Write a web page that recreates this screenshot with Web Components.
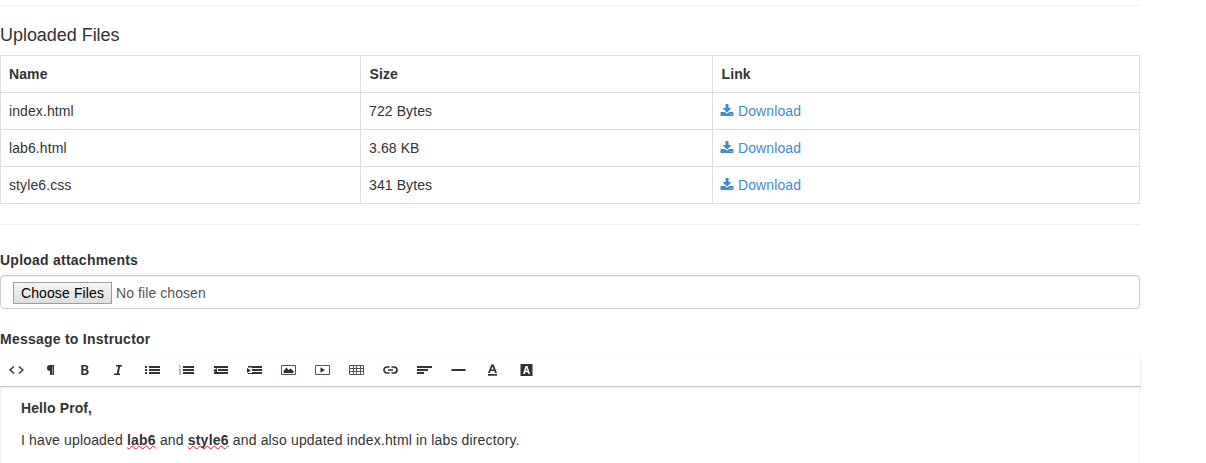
<!DOCTYPE html>
<html lang="en"><head><meta charset="utf-8"><title>Lab submission</title>
<style>
html,body{margin:0;height:463px;overflow:hidden;background:#fff}
body{font:14px/20px "Liberation Sans",Arial,sans-serif;color:#333}
</style></head><body>
<submission-page></submission-page>
<script>
const define=(name,html)=>customElements.define(name,class extends HTMLElement{
  constructor(){super();this.attachShadow({mode:'open'}).innerHTML=html;}
});
define('section-rule','<style>:host{display:block;height:1px;background:#eee}</style>');
define('download-link',`<style>:host{display:flex;color:#428bca;align-items:center}svg{width:14px;height:14px;margin:0 4px 0 -1px;fill:currentColor}a{letter-spacing:.1px}</style>
<svg viewBox="0 0 1792 1792"><path d="M1344 1344q0-26-19-45t-45-19-45 19-19 45 19 45 45 19 45-19 19-45zm256 0q0-26-19-45t-45-19-45 19-19 45 19 45 45 19 45-19 19-45zm128-224v320q0 40-28 68t-68 28h-1472q-40 0-68-28t-28-68v-320q0-40 28-68t68-28h465l135 136q58 56 136 56t136-56l136-136h464q40 0 68 28t28 68zm-325-569q17 41-14 70l-448 448q-18 19-45 19t-45-19l-448-448q-31-29-14-70 17-39 59-39h256v-448q0-26 19-45t45-19h256q26 0 45 19t19 45v448h256q42 0 59 39z"/></svg><a><slot>Download</slot></a>`);
define('file-table',`<style>:host{display:block}table{border-collapse:collapse;table-layout:fixed;width:1140px}
th,td{border:1px solid #ddd;padding:8px;height:20px;text-align:left;line-height:20px}th{letter-spacing:.1px}th+th{padding-left:8.500px}td{letter-spacing:.1px}</style>
<table><colgroup><col style="width:360px"><col style="width:352px"><col></colgroup>
<tr><th>Name</th><th>Size</th><th>Link</th></tr>
<tr><td>index.html</td><td>722 Bytes</td><td><download-link></download-link></td></tr>
<tr><td>lab6.html</td><td>3.68 KB</td><td><download-link></download-link></td></tr>
<tr><td>style6.css</td><td>341 Bytes</td><td><download-link></download-link></td></tr></table>`);
define('field-label','<style>:host{display:block;font-weight:bold;letter-spacing:.24px;height:20px}</style><slot></slot>');
define('file-picker',`<style>:host{display:flex;box-sizing:border-box;height:34px;border:1px solid #ccc;border-radius:4px;padding:6px 12px;align-items:flex-start;box-shadow:inset 0 1px 1px rgba(0,0,0,.075);color:#555;letter-spacing:.08px}
button{font:inherit;letter-spacing:.12px;line-height:18px;box-sizing:border-box;width:99px;height:22px;padding:0;border:1px solid #9d9d9d;background:linear-gradient(#f6f6f6,#dedede);color:#000;white-space:nowrap}span{margin-left:4px;line-height:22px}</style>
<button>Choose Files</button><span>No file chosen</span>`);
define('tool-button',`<style>:host{display:flex;width:34px;height:30px;align-items:center;justify-content:center;color:#333}</style><slot></slot>`);
const icons=[
'<path d="M5 3.500 1 7l4 3.500M10 3.500 14 7l-4 3.500" fill="none" stroke="#333" stroke-width="1.500"/>',
'<path d="M7 2h4v10H9.500V3.500H9V12H7V8a3 3 0 0 1 0-6z"/>',
'<path fill-rule="evenodd" d="M4.300 2h4q3 0 3 2.600 0 1.500-1.400 2 1.800.500 1.800 2.400 0 3-3.400 3h-4zm2 1.600v2.500h1.600q1.500 0 1.500-1.250t-1.500-1.250zm0 4v2.800h1.800q1.600 0 1.600-1.400t-1.600-1.400z"/>',
'<path d="M5 2h6v1.500H9.200L7.700 10.500H9V12H3v-1.500h2.700l1.500-7H5z"/>',
'<path d="M0 3h2v2H0zm0 3h2v2H0zm0 3h2v2H0zM4 3h11v2H4zm0 3h11v2H4zm0 3h11v2H4z"/>',
'<path d="M4 3h11v2H4zm0 3h11v2H4zm0 3h11v2H4z"/><path d="M0 2.500h1v2.500M0 6h1.500L0 8h2M0 9.500h1.500v2H0" fill="none" stroke="#777" stroke-width=".7"/>',
'<path d="M1 3h14v2H1zM5 6h10v2H5zM1 9h14v2H1zM0 7.500 4 5v5z"/>',
'<path d="M1 3h14v2H1zM5 6h10v2H5zM1 9h14v2H1z"/><path d="M0 4h5v6H0z" fill="#fff"/><path d="M4 7.500 0 5v5zM1 3h14v1.500H1z"/>',
'<path d="M.500 2.500h14v9H.500z" fill="none" stroke="#4b565c"/><path d="M2.500 10V8L5.500 4.500 7.500 7l2-1.500 3 2.500v2z"/>',
'<path d="M.500 2.500h14v9H.500z" fill="none" stroke="#4b565c"/><path d="M5.500 4.300 10 7l-4.500 2.700z"/>',
'<path d="M.500 2.500h14v9H.500zM.500 5.500h14M.500 8.500h14M4.500 2.500v9M7.500 2.500v9M11.500 2.500v9" fill="none" stroke="#555"/>',
'<path d="M6.500 10H4a3 3 0 0 1 0-6h2.500M8.500 4H11a3 3 0 0 1 0 6H8.500M5 7h5" fill="none" stroke="#333" stroke-width="1.700"/>',
'<path d="M0 3h15v2H0zM0 6h11v2H0zM0 9h7v2H0z"/>',
'<path d="M.500 6h14v2H.500z"/>',
'<path fill-rule="evenodd" d="M6.300 1.500h2.400L12 10h-2l-.700-2H5.700L5 10H3zM7.500 3.500 6.300 6.500h2.400zM3 11h9v1.700H3z"/>',
'<path fill-rule="evenodd" d="M1.500 1h12v12h-12zm5 2L4 11h1.800l.500-1.800h2.400l.500 1.800H11L8.500 3zm1 1.800.8 3H6.700z"/>'];
define('editor-toolbar',`<style>:host{display:flex;width:1141px;height:33px;box-sizing:border-box;background:#fff;border-top:1px solid #fafafa;border-bottom:1px solid #c9c9c9;border-right:1px solid #eee;box-shadow:0 1px 1px #eee}tool-button:first-child,tool-button:first-of-type{margin-left:-1px}svg{width:16px;height:14px;fill:#333}</style>
${icons.map(s=>`<tool-button><svg viewBox="-1 0 16 14">${s}</svg></tool-button>`).join('')}`);
define('message-editor',`<style>:host{display:block;width:1140px;height:76px;box-sizing:border-box;border:solid #eee;border-width:0 1px;padding:11px 20px 0}p{margin:0 0 12px;height:20px}.h{font-weight:bold;letter-spacing:.1px}.m{letter-spacing:.15px}.w{font-weight:bold;letter-spacing:.22px;text-decoration:underline wavy #e02020 1px;text-decoration-skip-ink:none;text-underline-offset:0}</style>
<p class="h">Hello Prof,</p><p class="m">I have uploaded <span class="w">lab6</span> and <span class="w">style6</span> and also updated index.html in labs directory.</p>`);
define('submission-page',`<style>:host{display:block;width:1140px;padding-top:5px}h4{font-size:18px;font-weight:400;line-height:20px;letter-spacing:-.04px;margin:19px 0 10px}.a{margin:25px 0 5px}.b{margin:20px 0 5px}</style>
<section-rule></section-rule><h4>Uploaded Files</h4><file-table></file-table>
<section-rule style="margin-top:20px"></section-rule>
<field-label class="a">Upload attachments</field-label><file-picker></file-picker>
<field-label class="b">Message to Instructor</field-label><editor-toolbar></editor-toolbar><message-editor></message-editor>`);
</script></body></html>
